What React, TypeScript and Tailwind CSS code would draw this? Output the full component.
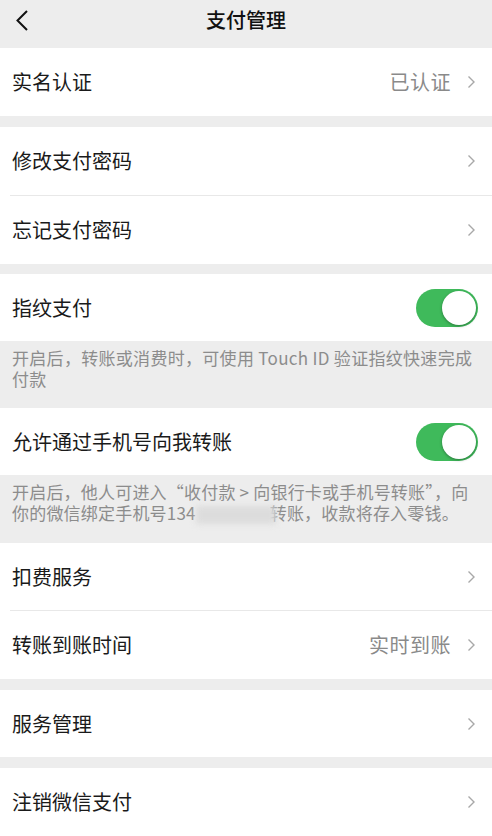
const font = { fontFamily: '"Noto Sans CJK SC", "Noto Sans", sans-serif' }

const Chevron = () => (
  <svg width="9" height="14" viewBox="0 0 9 14" className="shrink-0">
    <path d="M1.5 1.5 L7 7 L1.5 12.5" fill="none" stroke="#a8a8a8" strokeWidth="1.4" />
  </svg>
)

const Toggle = () => (
  <div className="relative w-[62px] h-[38px] rounded-full bg-[#3fba5b] shrink-0">
    <div className="absolute right-[2px] top-[2px] w-[34px] h-[34px] rounded-full bg-white shadow-[0_1px_3px_rgba(0,0,0,0.35)]" />
  </div>
)

const Row = ({ label, value, h = 68, toggle }: { label: string; value?: string; h?: number; toggle?: boolean }) => (
  <div className="flex items-center justify-between bg-white pl-3" style={{ height: h }}>
    <span className="text-[20px] text-[#1a1a1a] leading-none">{label}</span>
    {toggle ? (
      <div className="pr-[14px]">
        <Toggle />
      </div>
    ) : (
      <div className="flex items-center gap-4 pr-4">
        {value && <span className="text-[20px] text-[#8a8a8a] leading-none tracking-[0.5px]">{value}</span>}
        <Chevron />
      </div>
    )}
  </div>
)

const Divider = () => (
  <div className="bg-white h-px">
    <div className="ml-[10px] h-px bg-[#e8e8e8]" />
  </div>
)

const Gap = ({ h }: { h: number }) => <div style={{ height: h }} />

export default function App() {
  return (
    <div className="w-[492px] h-[836px] overflow-hidden bg-[#ededed]" style={font}>
      <div className="h-[48px]">
        <div className="relative h-[40px] flex items-center justify-center">
          <svg width="14" height="22" viewBox="0 0 14 22" className="absolute left-[15px] top-[10px]">
            <path d="M12 1 L2.5 10.5 L12 20" fill="none" stroke="#111" strokeWidth="2" />
          </svg>
          <span className="text-[20px] font-medium text-[#111] pl-[-2px]">支付管理</span>
        </div>
      </div>

      <Row label="实名认证" value="已认证" />
      <Gap h={11} />
      <Row label="修改支付密码" />
      <Divider />
      <Row label="忘记支付密码" />
      <Gap h={10} />
      <Row label="指纹支付" h={67} toggle />
      <div className="h-[67px] pl-3 pt-[6px] text-[17px] leading-[21px] tracking-[0.3px] text-[#8c8c8c] whitespace-nowrap">
        开启后，转账或消费时，可使用 Touch ID 验证指纹快速完成
        <br />
        付款
      </div>
      <Row label="允许通过手机号向我转账" h={67} toggle />
      <div className="h-[68px] pl-3 pt-[6px] text-[17px] leading-[21px] tracking-[0.2px] text-[#8c8c8c] whitespace-nowrap">
        开启后，他人可进入“收付款 &gt; 向银行卡或手机号转账”，向
        <br />
        你的微信绑定手机号134
        <span className="inline-block align-middle w-[80px] h-[18px] -mr-[6px] bg-[#dcdcdc] blur-[3px]" />
        转账，收款将存入零钱。
      </div>
      <Row label="扣费服务" h={67} />
      <Divider />
      <Row label="转账到账时间" value="实时到账" />
      <Gap h={11} />
      <Row label="服务管理" h={67} />
      <Gap h={11} />
      <Row label="注销微信支付" />
    </div>
  )
}
